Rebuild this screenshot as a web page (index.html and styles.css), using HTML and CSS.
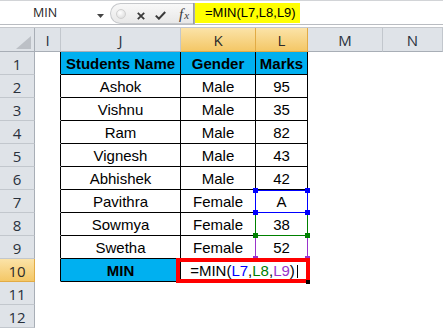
FILE: index.html
```html
<!DOCTYPE html>
<html>
<head>
<meta charset="utf-8">
<link rel="stylesheet" href="styles.css">
</head>
<body>
<div class="app">
  <div class="toolbar">
    <div class="namebox">
      <span class="nb-text">MIN</span>
      <svg class="nb-arrow" width="7" height="4" viewBox="0 0 7 4"><path d="M0 0H7L3.5 4Z" fill="#444"/></svg>
    </div>
    <div class="pill">
      <span class="grip"></span>
      <svg class="ic-x" width="8" height="8" viewBox="0 0 8 8"><path d="M0.8 0.8L7.2 7.2M7.2 0.8L0.8 7.2" stroke="#3a3a3a" stroke-width="1.8" fill="none"/></svg>
      <svg class="ic-check" width="11" height="9" viewBox="0 0 11 9"><path d="M0.8 4.6L3.9 7.7L10.2 1" stroke="#3a3a3a" stroke-width="2" fill="none"/></svg>
      <span class="fx"><span class="fx-f">f</span><span class="fx-x">x</span></span>
    </div>
    <div class="sep"></div>
    <div class="formula">=MIN(L7,L8,L9)</div>
  </div>
  <div class="gap"></div>
  <div class="sheet">
    <div class="ch corner"><svg width="35" height="23" viewBox="0 0 35 23"><path d="M31 8V21H16Z" fill="#bcc0c6"/></svg></div>
    <div class="ch">I</div>
    <div class="ch">J</div>
    <div class="ch hl">K</div>
    <div class="ch hl">L</div>
    <div class="ch">M</div>
    <div class="ch">N</div>

    <div class="rh">1</div><div class="c tl"></div><div class="c t hd">Students Name</div><div class="c t hd">Gender</div><div class="c t hd">Marks</div><div class="c"></div><div class="c"></div>
    <div class="rh">2</div><div class="c tl"></div><div class="c t">Ashok</div><div class="c t">Male</div><div class="c t">95</div><div class="c"></div><div class="c"></div>
    <div class="rh">3</div><div class="c tl"></div><div class="c t">Vishnu</div><div class="c t">Male</div><div class="c t">35</div><div class="c"></div><div class="c"></div>
    <div class="rh">4</div><div class="c tl"></div><div class="c t">Ram</div><div class="c t">Male</div><div class="c t">82</div><div class="c"></div><div class="c"></div>
    <div class="rh">5</div><div class="c tl"></div><div class="c t">Vignesh</div><div class="c t">Male</div><div class="c t">43</div><div class="c"></div><div class="c"></div>
    <div class="rh">6</div><div class="c tl"></div><div class="c t">Abhishek</div><div class="c t">Male</div><div class="c t">42</div><div class="c"></div><div class="c"></div>
    <div class="rh">7</div><div class="c tl"></div><div class="c t">Pavithra</div><div class="c t">Female</div><div class="c t">A<span class="rng r-blue"><i class="sq tl-sq"></i><i class="sq tr-sq"></i><i class="sq bl-sq"></i><i class="sq br-sq"></i></span></div><div class="c"></div><div class="c"></div>
    <div class="rh">8</div><div class="c tl"></div><div class="c t">Sowmya</div><div class="c t">Female</div><div class="c t">38<span class="rng r-green"><i class="sq tl-sq"></i><i class="sq tr-sq"></i><i class="sq bl-sq"></i><i class="sq br-sq"></i></span></div><div class="c"></div><div class="c"></div>
    <div class="rh">9</div><div class="c tl"></div><div class="c t">Swetha</div><div class="c t">Female</div><div class="c t">52<span class="rng r-purple"><i class="sq tl-sq"></i><i class="sq tr-sq"></i><i class="sq bl-sq"></i><i class="sq br-sq"></i></span></div><div class="c"></div><div class="c"></div>
    <div class="rh hl">10</div><div class="c tl"></div><div class="c t hd">MIN</div><div class="c t merged">=MIN(<span class="f-blue">L7</span>,<span class="f-green">L8</span>,<span class="f-purple">L9</span>)<span class="cursor"></span><span class="redbox"><span class="handle"></span></span></div><div class="c"></div><div class="c"></div>
    <div class="rh">11</div><div class="c"></div><div class="c"></div><div class="c"></div><div class="c"></div><div class="c"></div><div class="c"></div>
    <div class="rh">12</div><div class="c"></div><div class="c"></div><div class="c"></div><div class="c"></div><div class="c"></div><div class="c"></div>
  </div>
</div>
</body>
</html>
```
FILE: styles.css
```css
html, body {
  margin: 0;
  padding: 0;
  background: #fff;
}
body {
  width: 443px;
  height: 329px;
  overflow: hidden;
}
.app {
  width: 443px;
}
.toolbar {
  display: flex;
  height: 25px;
  box-sizing: border-box;
  border-top: 1px solid #d2d4d7;
  border-bottom: 1px solid #b9bcc1;
  background: #fff;
}
.namebox {
  width: 110px;
  display: flex;
  align-items: flex-start;
}
.nb-text {
  padding-left: 33px;
  padding-top: 2px;
  font-family: "Open Sans", sans-serif;
  font-size: 12.5px;
  line-height: 20px;
  color: #1e1e1e;
}
.nb-arrow {
  margin-left: auto;
  margin-right: 6px;
  margin-top: 13px;
}
.pill {
  width: 83px;
  height: 21px;
  margin-top: 2px;
  box-sizing: border-box;
  border: 1px solid #c6c8cb;
  border-right: none;
  border-radius: 11px 0 0 11px;
  background: linear-gradient(#f8f8f8, #e8e8e8);
  display: flex;
  align-items: center;
}
.grip {
  width: 10px;
  height: 10px;
  margin-left: 5px;
  border-radius: 50%;
  box-sizing: border-box;
  border: 1px solid #d0d0d0;
  background: radial-gradient(circle at 40% 35%, #ffffff, #d6d6d6);
}
.ic-x {
  margin-left: 11px;
  margin-top: 4px;
}
.ic-check {
  margin-left: 10px;
  margin-top: 3px;
}
.fx {
  margin-left: 13px;
  margin-top: 2px;
  font-family: "Liberation Serif", serif;
  font-style: italic;
  color: #3a3a3a;
  line-height: 16px;
}
.fx-f {
  font-size: 15px;
}
.fx-x {
  font-size: 11px;
  margin-left: 1px;
}
.sep {
  width: 2px;
  height: 21px;
  margin-top: 2px;
  background: linear-gradient(90deg, #8f9296, #b4b6b9);
}
.formula {
  width: 105px;
  height: 20px;
  margin-top: 2px;
  box-sizing: border-box;
  padding-left: 10px;
  background: #ffff00;
  font-family: "Liberation Sans", sans-serif;
  font-size: 13px;
  line-height: 20px;
  color: #000;
}
.gap {
  height: 3px;
  box-sizing: border-box;
  border-bottom: 1px solid #c4c7cc;
}
.sheet {
  display: grid;
  grid-template-columns: 35px 26px 120px 75px 52px 75px 60px;
  grid-template-rows: 24px repeat(12, 23px);
}
.ch, .rh {
  box-sizing: border-box;
  background: #dfe3e8;
  font-family: "Open Sans", sans-serif;
  font-size: 15px;
  line-height: 20px;
  padding-top: 2px;
  text-align: center;
  color: #29313c;
}
.ch {
  border-right: 1px solid #c2c7cd;
  border-bottom: 1px solid #a8aeb6;
}
.rh {
  border-right: 1px solid #a8aeb6;
  border-bottom: 1px solid #c2c7cd;
}
.corner {
  padding: 0;
  border-right-color: #a8aeb6;
}
.corner svg {
  display: block;
}
.ch.hl, .rh.hl {
  background: linear-gradient(#fbe3a8, #f4c766);
  border-right-color: #e2ab45;
  border-bottom-color: #e2ab45;
  color: #2a2a2a;
}
.c {
  position: relative;
  box-sizing: border-box;
  border-right: 1px solid transparent;
  border-bottom: 1px solid transparent;
  font-family: "Liberation Sans", sans-serif;
  font-size: 15px;
  line-height: 20px;
  padding-top: 2px;
  text-align: center;
  color: #000;
  white-space: nowrap;
}
.c.tl {
  border-right-color: #000;
}
.c.t {
  border-right-color: #000;
  border-bottom-color: #000;
}
.c.hd {
  background: #00b0f0;
  font-weight: bold;
}
.c.merged {
  grid-column: span 2;
}
.f-blue { color: #0000ff; }
.f-green { color: #008000; }
.f-purple { color: #9933cc; }
.cursor {
  display: inline-block;
  width: 1px;
  height: 13px;
  margin-left: 2px;
  vertical-align: -2px;
  background: #000;
}
.rng {
  position: absolute;
  left: -1px;
  right: -1px;
  box-sizing: border-box;
  border: 1px solid currentColor;
}
.r-blue {
  color: #0000ff;
  top: 0;
  bottom: -1px;
  z-index: 3;
}
.r-green {
  color: #008000;
  top: -1px;
  bottom: -1px;
  z-index: 2;
}
.r-purple {
  color: #9933cc;
  top: -1px;
  bottom: -1px;
  z-index: 1;
}
.sq {
  position: absolute;
  width: 5px;
  height: 5px;
  background: currentColor;
}
.tl-sq { left: -3px; top: -3px; }
.tr-sq { right: -3px; top: -3px; }
.bl-sq { left: -3px; bottom: -3px; }
.br-sq { right: -3px; bottom: -3px; }
.redbox {
  position: absolute;
  left: -5px;
  right: -3px;
  top: -1px;
  bottom: -2px;
  box-sizing: border-box;
  border: 4px solid #ff0000;
  z-index: 4;
}
.handle {
  position: absolute;
  right: -4px;
  bottom: -5px;
  width: 4px;
  height: 4px;
  background: #000;
}
```
